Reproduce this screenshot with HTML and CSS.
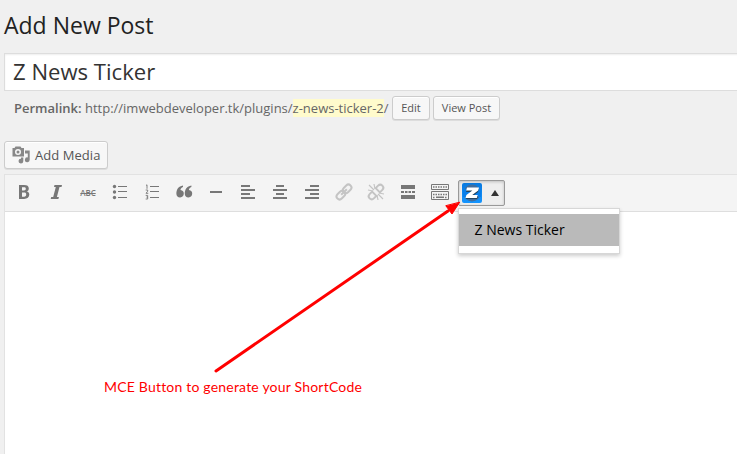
FILE: index.html
```html
<!DOCTYPE html>
<html lang="en">
<head>
<meta charset="utf-8">
<title>Add New Post</title>
<link rel="stylesheet" href="styles.css">
</head>
<body>
<main class="page">
  <h1 class="heading">Add New Post</h1>
  <div class="title-field">Z News Ticker</div>
  <div class="permalink">
    <span class="link-text"><strong>Permalink:</strong> http://imwebdeveloper.tk/plugins/<mark>z-news-ticker-2</mark>/</span>
    <button class="small-btn edit">Edit</button>
    <button class="small-btn view">View Post</button>
  </div>
  <button class="media-btn">
    <svg width="18" height="18" viewBox="0 0 18 18" fill="#888">
      <path fill-rule="evenodd" d="M.5 2h2l1-1.500h5l1 1.500H12v8.500H.500zM6 3a3 3 0 1 0 0 6 3 3 0 0 0 0-6zm0 1.500a1.500 1.500 0 1 1 0 3 1.500 1.500 0 0 1 0-3z"/>
      <path d="M13 4.500h4.700v9.300a2.400 2.400 0 1 1-1.900-2.400V7.500H13z"/>
      <path d="M9 11.500h2.300v3.700a2.400 2.400 0 1 1-2.300-2.500z"/>
    </svg>
    <span>Add Media</span>
  </button>
  <section class="editor">
    <div class="toolbar">
      <span class="tool"><svg viewBox="0 0 20 20"><path fill-rule="evenodd" d="M5 3h5c3.300 0 4.800 1.100 4.800 3.500 0 1.600-.7 2.600-2.100 3 1.700.3 2.600 1.300 2.600 3.100 0 2.800-2 4.400-5.200 4.400H5zM8 5.200v3.300h2c1.200 0 1.800-.5 1.800-1.700S11.200 5.200 10 5.200zm0 5.400v4.100h2.200c1.300 0 2-.7 2-2.100s-.7-2-2-2z"/></svg></span>
      <span class="tool"><svg viewBox="0 0 20 20"><path d="M8.500 3H16l-.5 2h-2l-2.600 10h2l-.5 2H4.700l.5-2h2L9.800 5H8z"/></svg></span>
      <span class="tool abc"><s>ABC</s></span>
      <span class="tool"><svg viewBox="0 0 20 20"><circle cx="4.500" cy="4.500" r="1.700"/><circle cx="4.500" cy="10" r="1.700"/><circle cx="4.500" cy="15.500" r="1.700"/><path d="M8 4h9v1H8zM8 9h9v1H8zM8 15h9v1H8z"/></svg></span>
      <span class="tool"><svg viewBox="0 0 20 20"><path d="M8 4h9v1H8zM8 9h9v1H8zM8 15h9v1H8z"/><path class="line thin" d="M4 3.500l1-.7v4M3.700 8h2v1.200L4 11.300h2.300M3.700 13.400h2v1.700h-1 1V17h-2"/></svg></span>
      <span class="tool"><svg viewBox="0 0 20 20"><path d="M9 3.500V5C7.500 5.500 6.600 6.500 6.500 8a3.700 3.700 0 1 1-4.100 4C2.200 7.500 4.500 4.300 9 3.500zM17.400 3.500V5c-1.500.5-2.400 1.500-2.500 3a3.700 3.700 0 1 1-4.100 4C10.600 7.500 12.900 4.300 17.400 3.500z"/></svg></span>
      <span class="tool"><svg viewBox="0 0 20 20"><path d="M4 9h12v2H4z"/></svg></span>
      <span class="tool"><svg viewBox="0 0 20 20"><path d="M3 3h9v2H3zM3 7h14v2H3zM3 11h9v2H3zM3 15h14v2H3z"/></svg></span>
      <span class="tool"><svg viewBox="0 0 20 20"><path d="M6 3h8v2H6zM3 7h14v2H3zM6 11h8v2H6zM3 15h14v2H3z"/></svg></span>
      <span class="tool"><svg viewBox="0 0 20 20"><path d="M8 3h9v2H8zM3 7h14v2H3zM8 11h9v2H8zM3 15h14v2H3z"/></svg></span>
      <span class="tool off"><svg viewBox="0 0 20 20"><g transform="rotate(-45 10 10)"><rect class="line link" x="0.800" y="7" width="9.500" height="6" rx="3"/><rect class="line link" x="9.700" y="7" width="9.500" height="6" rx="3"/><path d="M6 9h8v2H6z"/></g></svg></span>
      <span class="tool off"><svg viewBox="0 0 20 20"><g transform="rotate(-45 10 10)"><path class="line link" d="M7.500 7H4a3 3 0 0 0 0 6h3.500zM12.500 7H16a3 3 0 0 1 0 6h-3.500z"/></g><path class="line burst" d="M8 8L3 3M9 7L8 2M7 9L2 8M12 12l5 5M11 13l1 5M13 11l5 1"/></svg></span>
      <span class="tool"><svg viewBox="0 0 20 20"><path d="M3 3h14v4H3zM3 9h3v2H3zM7 9h2.500v2H7zM10.500 9H13v2h-2.500zM14 9h3v2h-3zM3 13h14v4H3z"/></svg></span>
      <span class="tool"><svg viewBox="0 0 20 20"><path class="line key" d="M1.500 2.500h17v5h-17zM1.500 9.500h17v8h-17z"/><path class="line dots" d="M3 5h14M3 12.500h14M3 15.500h2M15 15.500h2"/><path d="M6 14.500h8v1.500H6z"/></svg></span>
      <div class="split">
        <svg class="z-logo" viewBox="0 0 20 20">
          <defs><linearGradient id="blue" x2="0" y2="1"><stop stop-color="#0879df"/><stop offset="1" stop-color="#1595ff"/></linearGradient></defs>
          <rect width="20" height="20" rx="2" fill="url(#blue)"/>
          <circle cx="10" cy="10" r="8.500" fill="#416d9c"/>
          <path d="M1 6h18v8H1z" fill="#087eea"/>
          <path d="M5 6h12l-1 3-5 4h5l-1 3H4l1-3 5-4H4z" fill="#24455f"/>
          <path d="M5 4.500h12l-.8 3-6 4.500h5.500l-.9 3H3.500l.9-3 6-4.500H4.200z" fill="#fff"/>
        </svg>
        <svg class="caret" viewBox="0 0 8 6"><path d="M4 0l4 6H0z"/></svg>
        <div class="menu"><div class="menu-item">Z News Ticker</div></div>
      </div>
    </div>
    <div class="content">
      <p class="note">MCE Button to generate your ShortCode</p>
    </div>
  </section>
  <svg class="arrow" viewBox="0 0 250 174"><path d="M5 171L237 11"/><path class="head" d="M248.500 2.500L241 14L235 6z"/></svg>
</main>
</body>
</html>
```
FILE: styles.css
```css
* { box-sizing: border-box; }
body { margin: 0; background: #f0f0f0; overflow: hidden; font-family: "Open Sans", sans-serif; color: #222; }
.page { position: relative; height: 454px; padding-left: 4px; display: flex; flex-direction: column; align-items: flex-start; }
.heading { margin: 0; height: 53px; padding-top: 10px; font-size: 23px; line-height: 30px; font-weight: 400; }
.title-field { flex: none; width: 740px; height: 38px; border: 1px solid #ddd; background: #fff; box-shadow: inset 0 1px 2px rgba(0,0,0,.07); padding: 0 8px; font-size: 22.1px; line-height: 35px; color: #333; }
.permalink { height: 50px; padding: 5px 0 0 10px; display: flex; align-items: flex-start; font-size: 13px; line-height: 24px; color: #666; white-space: nowrap; }
.link-text { width: 378px; }
.link-text strong { font-weight: 600; }
mark { background: #fffbcc; color: inherit; }
button { font-family: inherit; border: 1px solid #ccc; border-radius: 3px; background: #f7f7f7; color: #555; box-shadow: inset 0 1px 0 #fff, 0 1px 0 rgba(0,0,0,.08); padding: 0; white-space: nowrap; }
.small-btn { height: 24px; font-size: 11px; line-height: 22px; }
.edit { width: 38px; margin-right: 3px; }
.view { width: 67px; }
.media-btn { flex: none; width: 104px; height: 28px; display: flex; align-items: center; padding-left: 7px; gap: 5px; font-size: 13px; line-height: 26px; }
.media-btn svg { width: 18px; height: 18px; flex: none; }
.media-btn span { letter-spacing: .05px; }
.editor { margin-top: 5px; width: 740px; flex: 1; border: 1px solid #e2e2e2; border-bottom: 0; background: #fff; display: flex; flex-direction: column; }
.toolbar { height: 37px; flex: none; background: #f4f4f4; border-bottom: 1px solid #dedede; display: flex; align-items: flex-start; padding: 5px 0 0 3px; }
.tool { width: 32px; height: 24px; display: flex; justify-content: center; align-items: center; fill: #777; color: #777; }
.tool svg { width: 20px; height: 20px; }
.off { fill: #c4c4c4; color: #c4c4c4; }
.line { fill: none; stroke: currentColor; }
.thin { stroke-width: .9; }
.link { stroke-width: 2; }
.burst { stroke-width: 1.2; }
.key { stroke-width: 1; }
.dots { stroke-width: 1.5; stroke-dasharray: 1.5 1; }
.abc { font-size: 8px; font-weight: 600; letter-spacing: -.1px; }
.split { position: relative; width: 47px; height: 26px; margin-left: 2px; border: 1px solid #999; border-radius: 2px; background: #eee; box-shadow: inset 0 1px 3px rgba(0,0,0,.2); display: flex; align-items: center; padding-left: 3px; }
.z-logo { width: 20px; height: 20px; }
.caret { width: 8px; height: 6px; margin-left: 9px; fill: #333; }
.menu { position: absolute; z-index: 2; left: -1px; top: 27px; width: 162px; height: 46px; padding: 5px 0; background: #fff; border: 1px solid #d7d7d7; box-shadow: 0 2px 4px rgba(0,0,0,.2); }
.menu-item { height: 32px; background: #bababa; padding-left: 15.5px; font-size: 14px; line-height: 32px; color: #000; white-space: nowrap; }
.content { flex: 1; padding: 164px 0 0 99px; }
.note { margin: 0; font-family: Lato, sans-serif; font-size: 14px; line-height: 22px; letter-spacing: .2px; color: #f00; white-space: nowrap; }
.arrow { position: absolute; z-index: 3; left: 211px; top: 200px; width: 250px; height: 174px; fill: none; stroke: #f00; stroke-width: 3; stroke-linecap: round; pointer-events: none; }
.head { fill: #f00; stroke-width: 1; }
```
